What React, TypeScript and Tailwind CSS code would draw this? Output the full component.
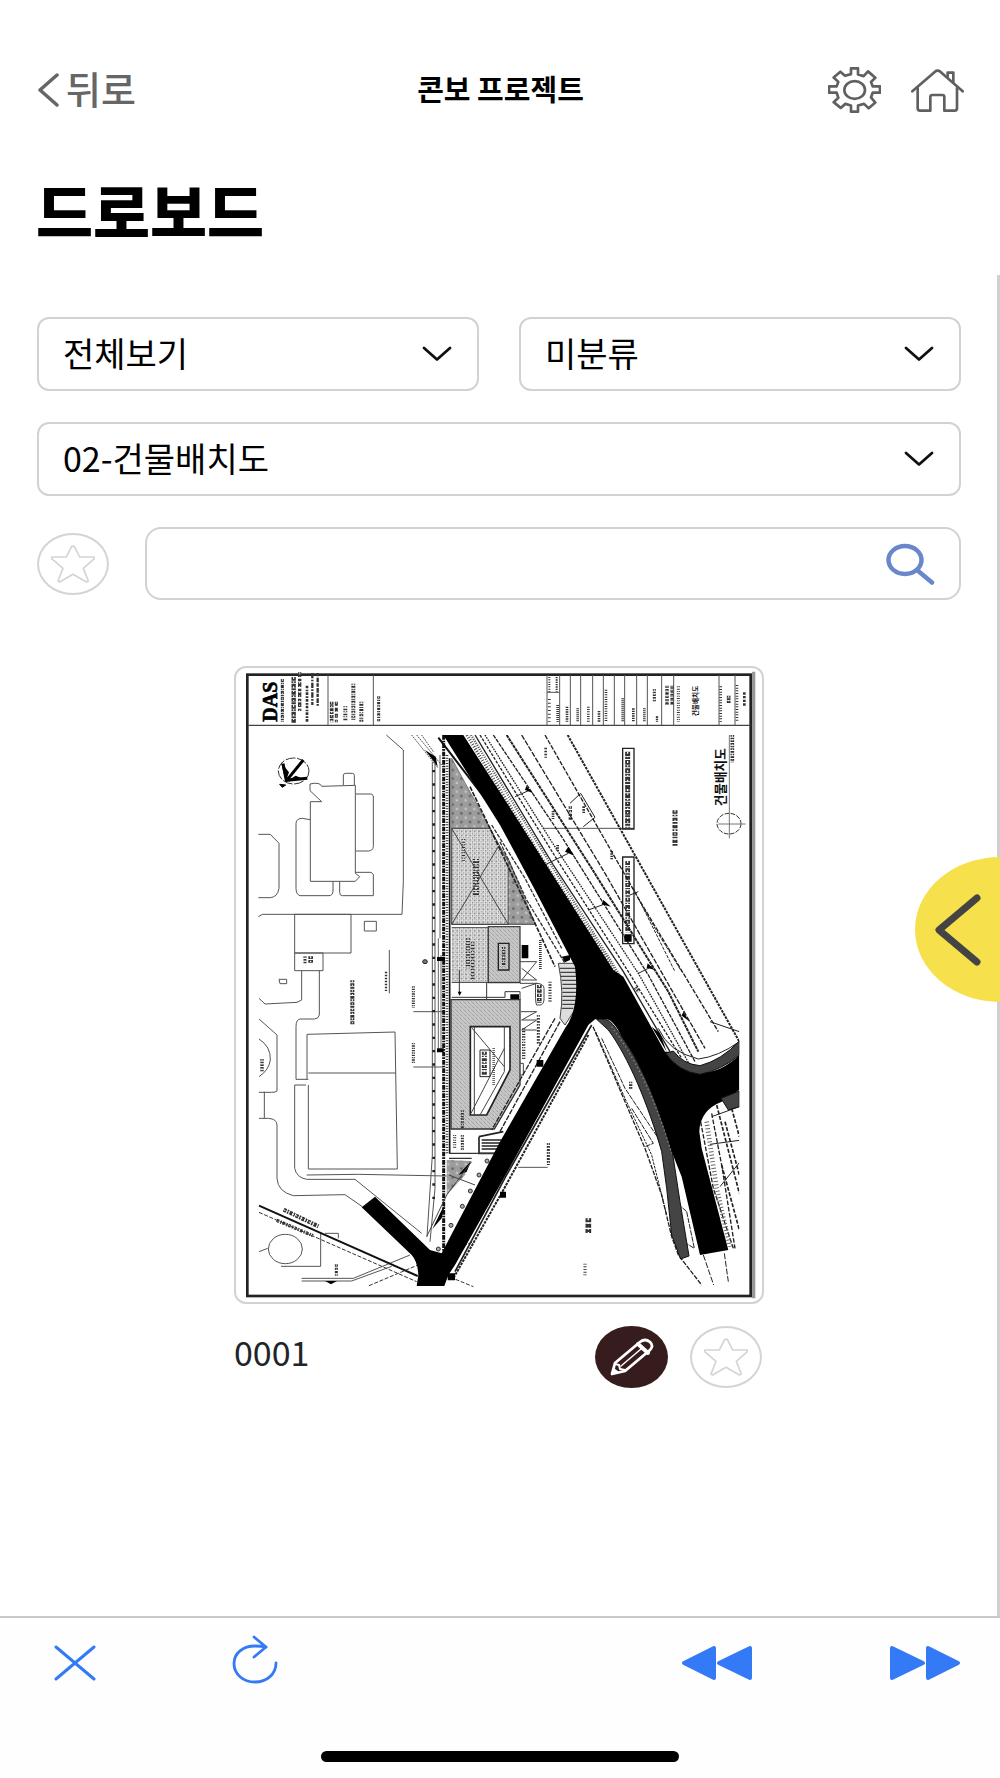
import React from 'react';

const stroke = { fill: 'none', strokeLinecap: 'round', strokeLinejoin: 'round' } as const;

function StarIcon() {
  return (
    <svg viewBox="0 0 132 114" className="h-[38px] w-11" aria-hidden="true">
      <path d="M62 4H70L86 36H130V41L97 70L112 108L106 111L66 88L26 111L21 108L36 70L2 41V36H46Z" stroke="#d4d4d4" strokeWidth="5" {...stroke} />
    </svg>
  );
}

function StarButton({ label }: { label: string }) {
  return (
    <button type="button" aria-label={label} className="flex h-[62px] w-[72px] shrink-0 items-center justify-center rounded-[50%] border-2 border-[#d4d4d4]">
      <StarIcon />
    </button>
  );
}

function Dropdown({ label, options }: { label: string; options: string[] }) {
  return (
    <div className="relative w-full">
      <select aria-label={label} className="h-[74px] w-full appearance-none rounded-xl border-2 border-[#d2d2d2] bg-white pr-16 pb-1 pl-6 text-[34px] text-black">
        {options.map((o) => (
          <option key={o}>{o}</option>
        ))}
      </select>
      <svg viewBox="0 0 30 16" className="pointer-events-none absolute top-[29px] right-[27px] h-4 w-[30px]" aria-hidden="true">
        <path d="M2 2L15 13.500L28 2" stroke="#111" strokeWidth="2.800" {...stroke} />
      </svg>
    </div>
  );
}

/* Rows of unreadable annotation on the sheet, drawn as broken strokes. */
const notes: [number, number, number, number, number, string][] = [
  [172, 72, 172, 200, 9, '9 2 5 2'],
  [206, 66, 206, 204, 13, '11 2 6 2'],
  [224, 52, 224, 168, 10, '14 5 8 3'],
  [246, 92, 246, 202, 8, '8 4 5 3'],
  [262, 54, 262, 150, 7, '16 4 5 4'],
  [278, 54, 278, 152, 7, '10 4 14 3'],
  [320, 140, 320, 202, 11, '9 2 6 3'],
  [334, 140, 334, 202, 9, '12 6'],
  [361, 154, 361, 196, 12, '3 4 5 3'],
  [385, 86, 385, 196, 12, '3 3 6 3'],
  [409, 140, 409, 200, 12, '3 3 6 4'],
  [461, 124, 461, 202, 9, '7 3 4 3'],
  [973, 66, 973, 110, 6, '3 4'], [995, 66, 995, 110, 6, '4 3'],
  [973, 132, 973, 200, 8, '3 8'], [998, 150, 998, 200, 8, '3 3'],
  [1026, 155, 1026, 200, 8, '4 3'], [1058, 160, 1058, 200, 8, '3 3'],
  [1090, 155, 1090, 200, 8, '3 4'], [1122, 168, 1122, 200, 8, '4 3'],
  [1143, 104, 1143, 200, 8, '3 4'], [1193, 130, 1193, 200, 8, '3 3'],
  [1225, 160, 1225, 200, 8, '4 3'], [1258, 160, 1258, 200, 8, '3 3'],
  [1288, 102, 1288, 140, 9, '5 3'], [1296, 184, 1296, 200, 7, '5 2'],
  [1326, 92, 1326, 152, 10, '7 3'], [1341, 92, 1341, 150, 9, '9 3'],
  [1360, 94, 1360, 200, 9, '3 4'],
  [1487, 94, 1487, 200, 8, '3 5'], [1511, 122, 1511, 146, 11, '6 2'],
  [1536, 90, 1536, 200, 8, '3 5'], [1558, 112, 1558, 156, 8, '7 4'],
  [962, 278, 962, 308, 8, '5 4'], [984, 468, 984, 492, 8, '4 3'],
  [998, 570, 998, 588, 8, '4 3'], [1036, 454, 1036, 496, 10, '7 4'],
  [1076, 454, 1076, 474, 8, '5 3'], [1160, 588, 1160, 614, 8, '4 3'],
  [1208, 290, 1208, 518, 15, '14 2 6 3'], [1208, 618, 1208, 832, 14, '12 3 4 3'],
  [1350, 466, 1350, 576, 15, '10 3 5 4'], [1522, 240, 1522, 322, 11, '5 3'],
  [240, 904, 240, 926, 9, '5 3'], [257, 904, 257, 926, 14, '8 3'],
  [382, 976, 382, 1110, 12, '6 3 8 2'], [483, 950, 483, 1008, 7, '5 4'],
  [565, 994, 565, 1058, 9, '4 3'], [565, 1164, 565, 1224, 9, '4 3'],
  [712, 1440, 712, 1486, 9, '5 3'], [689, 1440, 689, 1480, 9, '3 4'],
  [111, 1212, 111, 1250, 10, '5 3'], [176, 1664, 280, 1714, 12, '9 3 5 3'],
  [155, 1696, 264, 1742, 10, '8 4 4 3'], [334, 1828, 334, 1862, 9, '7 3'],
  [970, 1464, 970, 1530, 9, '6 3'], [1090, 1690, 1090, 1738, 17, '12 4'],
  [1080, 1826, 1080, 1862, 9, '3 5'], [896, 1120, 896, 1216, 10, '4 4'],
  [940, 1080, 940, 1168, 9, '5 4'], [975, 980, 975, 1040, 9, '4 4'],
  [946, 855, 946, 945, 8, '3 3'], [943, 990, 943, 1044, 14, '10 3'],
  [1217, 1280, 1217, 1302, 10, '5 3'], [1230, 998, 1242, 1010, 10, '5 3'],
];

/* Annotation that lies on top of the paving and the buildings. */
const planNotes: [number, number, number, number, number, string][] = [
  [715, 552, 715, 618, 10, '3 5'],
  [753, 612, 753, 722, 18, '3 4 5 4'],
  [729, 850, 729, 940, 12, '4 4'],
  [743, 860, 743, 975, 10, '5 4'],
  [778, 1190, 778, 1260, 15, '9 3 4 4'],
  [806, 1180, 806, 1290, 8, '2 4'],
  [712, 1366, 712, 1420, 9, '5 3'],
  [836, 876, 836, 934, 10, '6 3 4 3'],
];

function Notes({ rows }: { rows: typeof notes }) {
  return (
    <g fill="none">
      {rows.map(([x1, y1, x2, y2, w, dash], i) => (
        <g key={i}>
          <path d={`M${x1} ${y1}L${x2} ${y2}`} stroke="#333" strokeWidth={w} strokeDasharray={dash} />
          {w > 8 && <path d={`M${x1} ${y1}L${x2} ${y2}`} stroke="#fff" strokeWidth={w / 4} strokeDasharray="6 7 4 11" />}
        </g>
      ))}
    </g>
  );
}

function SitePlan() {
  return (
    <svg viewBox="27 33 1590 1914" className="block h-auto w-full" role="img" aria-label="건물배치도 도면">
      <defs>
        <pattern id="grid" width="13" height="13" patternUnits="userSpaceOnUse">
          <rect width="13" height="13" fill="#e6e6e6" />
          <path d="M1 0V9M0 2H9" stroke="#666" strokeWidth="2" strokeDasharray="3 3" />
          <circle cx="8" cy="9" r="3" fill="#8a8a8a" />
        </pattern>
        <pattern id="hatch" width="12" height="12" patternUnits="userSpaceOnUse">
          <rect width="12" height="12" fill="#c6c6c6" />
          <path d="M0 0L12 12" stroke="#858585" strokeWidth="2" strokeDasharray="4 3" />
        </pattern>
        <pattern id="planting" width="26" height="26" patternUnits="userSpaceOnUse">
          <rect width="26" height="26" fill="#9c9c9c" />
          <circle cx="7" cy="7" r="4" fill="#666" />
          <circle cx="20" cy="20" r="4" fill="#c4c4c4" />
        </pattern>
        <clipPath id="sheet"><rect x="100" y="240" width="1443" height="1655" /></clipPath>
      </defs>

      {/* sheet border and title block */}
      <g fill="none" stroke="#222">
        <path d="M1586 50V1930" stroke="#999" strokeWidth="10" />
        <rect x="67" y="59" width="1510" height="1864" strokeWidth="8" />
        <path d="M70 211H1577" strokeWidth="4" stroke="#444" />
        <path d="M309 60V211M445 60V211M966 60V211M1004 60V211M1036 60V211M1067 60V211M1103 60V211M1135 60V211M1168 60V211M1199 60V211M1235 60V211M1267 60V211M1310 60V211M1346 60V211M1482 60V211M1530 60V211M966 112H1004" strokeWidth="3" stroke="#555" />
      </g>
      <Notes rows={notes} />
      <text transform="translate(155 200) rotate(-90)" fontFamily="'Liberation Serif', serif" fontWeight="700" fontSize="60" fill="#000" stroke="#000" strokeWidth="2">DAS</text>
      <text transform="translate(1500 454) rotate(-90)" fontFamily="'Noto Sans CJK KR', sans-serif" fontWeight="700" fontSize="38" fill="#111">건물배치도</text>
      <text transform="translate(1418 184) rotate(-90)" fontFamily="'Noto Sans CJK KR', sans-serif" fontWeight="700" fontSize="20" fill="#111">건물배치도</text>

      {/* neighbouring lots */}
      <g fill="none" stroke="#555" strokeWidth="3">
        <path d="M484 240L535 285V680L531 778H112L100 785" />
        <path d="M255 387Q285 380 290 394L391 391V655L404 665L391 679H256V440H290L255 407Z" />
        <path d="M355 390V360Q356 355 362 355H382Q388 355 388 362V390M393 417H440L445 423V575Q443 588 430 588H393M391 652H438L445 658V722H352Q344 722 344 712V680M324 680V708Q323 722 312 722H225Q213 718 213 700V505Q214 490 232 490L255 494" />
        <path d="M100 538H136L162 565V700Q158 726 136 728H100M209 778H378V894H209ZM209 894H294V947H209ZM418 799H454V828H418ZM230 947V1035L216 1042L120 1047L102 1030M283 947V1080Q280 1092 268 1092H225Q213 1094 213 1115V1273H250M162 973H185V986H165ZM102 1092L156 1140V1308Q152 1312 140 1312H102M102 1152Q138 1175 136 1215Q132 1245 102 1265M102 1390H130Q156 1392 156 1410V1570Q158 1610 205 1622L360 1619L412 1655M209 1290H243M209 1290V1540Q215 1568 245 1573H390L590 1735" />
        <path d="M246 1138L510 1131L517 1542H250V1290M246 1138V1273M250 1254H512M245 1560L400 1558L665 1563" />
        <path d="M118 1310V1390M287 1735V1834H168M300 1735H340V1750M230 1870H385L555 1800M230 1878H380L500 1834" />
        <ellipse cx="181" cy="1782" rx="51" ry="44" />
        <path d="M102 1790L128 1780M493 885V1015M565 1070H655M565 1236H655M955 520H1225M880 1537H968" />
      </g>
      <path d="M102 1652L578 1863" stroke="#111" strokeWidth="6" />
      <path d="M102 1672L575 1880M432 1892L745 1760M660 1860L745 1895" fill="none" stroke="#333" strokeWidth="3" strokeDasharray="12 5" />
      <path d="M300 1878L318 1888L336 1878Z" />

      {/* north arrow and key circle */}
      <g fill="none" stroke="#333" strokeWidth="3">
        <ellipse cx="206" cy="348" rx="46" ry="39" strokeDasharray="30 5" />
        <ellipse cx="1512" cy="506" rx="36" ry="31" strokeDasharray="14 4" />
        <path d="M1513 240V550M1480 507H1562" stroke="#777" />
      </g>
      <path d="M235 315L185 376M174 326L184 376L247 370" fill="none" stroke="#000" strokeWidth="9" />
      <path d="M168 322L192 352L182 380ZM182 380L212 362L236 372Z" />
      <path d="M164 388L182 390L172 397Z" stroke="#000" strokeWidth="3" />

      <g clipPath="url(#sheet)">
        {/* site boundary */}
        <path d="M622 320V1500L606 1745M630 320V1600L615 1760" fill="none" stroke="#555" strokeWidth="3" />
        <path d="M626 345V1640" stroke="#222" strokeWidth="8" strokeDasharray="7 33" />
        <path d="M645 300V850M640 850V1180M648 900V1180" stroke="#666" strokeWidth="3" fill="none" />
        <path d="M656 240V1795" stroke="#111" strokeWidth="9" strokeDasharray="14 3 5 3" />
        <path d="M666 300V1500" stroke="#333" strokeWidth="8" strokeDasharray="3 5" />
        <path d="M674 310V1495" stroke="#111" strokeWidth="5" />
        <path d="M636 906H660V918H636ZM636 1180H656V1192H636Z" />
        <ellipse cx="600" cy="920" rx="7" ry="6" fill="#777" stroke="#222" strokeWidth="3" />
        <path d="M560 240L640 340M575 240L650 330M590 240L625 290" stroke="#444" strokeWidth="3" strokeDasharray="5 3" />
        <path d="M600 285L632 305L638 335Z" />

        {/* buildings and paving */}
        <path d="M680 310L795 520H680Z" fill="url(#planting)" stroke="#555" strokeWidth="2" />
        <path d="M680 520H795L850 620V808H680Z" fill="url(#grid)" stroke="#444" strokeWidth="3" />
        <path d="M680 520L850 808M820 575L680 808" stroke="#444" strokeWidth="3" />
        <path d="M820 575L850 610L930 805H850V620Z" fill="url(#planting)" stroke="#555" strokeWidth="2" />
        <rect x="680" y="820" width="110" height="160" fill="url(#grid)" />
        <path d="M680 808H930M680 818H790V980" fill="none" stroke="#444" strokeWidth="3" />
        <path d="M790 815H885V983H790Z" fill="url(#hatch)" stroke="#444" strokeWidth="4" />
        <path d="M820 865H852V945H820Z" fill="none" stroke="#222" strokeWidth="4" />
        <path d="M680 982H885M680 1027H840V1010H885V1034H680M785 982V1034M703 945V1020" fill="none" stroke="#333" strokeWidth="3" />
        <path d="M856 1018H882V1034H856ZM890 870H910V910H890ZM698 1010H710L704 1022Z" />
        <path d="M678 1034H885V1290L808 1422H678Z" fill="url(#hatch)" stroke="#333" strokeWidth="4" />
        <path d="M736 1115H855V1245L785 1380H736Z" fill="#fff" stroke="#222" strokeWidth="5" />
        <path d="M748 1115V1380M838 1115V1250L765 1380M740 1118L838 1235M738 1375L838 1180" fill="none" stroke="#444" strokeWidth="3" />
        <path d="M765 1185H795V1265H765Z" fill="none" stroke="#222" strokeWidth="3" />
        <path d="M885 920H935L890 975H935L890 940M885 985H935L890 1000M888 1070H935L890 1095H935L890 1125H935M885 1225H895V1260H885M932 985Q957 985 957 1000V1035Q955 1050 945 1050H935Q930 1045 932 985" fill="none" stroke="#444" strokeWidth="3" />
        <path d="M762 1445L835 1430M762 1445V1495H840M770 1455H830M770 1464H830M770 1473H825M770 1482H820" fill="none" stroke="#222" strokeWidth="5" />
        <path d="M672 1495H840M672 1510H740" stroke="#333" strokeWidth="4" />
        <path d="M665 1515L738 1518L720 1560L665 1620Z" fill="url(#planting)" />
        <path d="M738 1518L725 1550L700 1560ZM660 1650L650 1690L622 1722L650 1665Z" />
        <path d="M740 1520L665 1620L605 1745M672 1560L750 1590" fill="none" stroke="#444" strokeWidth="3" />
        <g fill="#aaa" stroke="#333" strokeWidth="3">
          <circle cx="786" cy="1518" r="6" />
          <circle cx="762" cy="1560" r="6" />
          <circle cx="736" cy="1608" r="6" />
          <circle cx="712" cy="1654" r="6" />
          <circle cx="678" cy="1711" r="6" />
          <circle cx="640" cy="1782" r="6" />
        </g>
        <Notes rows={planNotes} />

        {/* frontage between the plots and the main road */}
        <path d="M640 248L780 430" fill="none" stroke="#111" strokeWidth="6" />
        <path d="M735 395L795 520L930 805L990 935" fill="none" stroke="#222" strokeWidth="5" strokeDasharray="14 4" />
        <path d="M825 560L905 735L1020 925M800 510L900 670L1010 880" fill="none" stroke="#333" strokeWidth="4" strokeDasharray="12 4" />
        <path d="M1000 925H1055L1062 1045L1020 1110L1005 1090Q1018 1010 1000 925Z" fill="#ddd" stroke="#444" strokeWidth="3" />
        <path d="M1004 940H1060M1006 952H1060M1008 964H1060M1010 976H1060M1012 988H1060M1012 1000H1060M1012 1012H1060M1012 1024H1060M1012 1036H1055M1012 1048H1050M1010 1060H1045" stroke="#444" strokeWidth="4" />
        <path d="M1005 1100L825 1430M990 1090L800 1425" fill="none" stroke="#222" strokeWidth="4" strokeDasharray="16 4" />
        <path d="M935 1215H955V1235H935ZM1010 905L1035 900V915L1020 922ZM905 735L930 770Z" />

        {/* outer lanes */}
        <g fill="none" stroke="#222" strokeWidth="4">
          <path d="M1028 240L1543 1160" strokeDasharray="8 3" strokeWidth="6" />
          <path d="M960 240L1240 730L1480 1130" strokeDasharray="14 4" />
          <path d="M890 240L1140 655L1440 1180" strokeDasharray="16 4" />
          <path d="M845 240L1100 640L1330 1010L1420 1190" strokeWidth="6" strokeDasharray="10 2" />
          <path d="M805 240L1010 545L1270 960L1410 1220" strokeDasharray="12 3" />
          <path d="M780 240L980 560L1240 955L1400 1240" strokeDasharray="5 3" />
          <path d="M765 240L1000 620L1210 950L1370 1210" strokeDasharray="9 4" />
          <path d="M750 240L985 630L1195 950L1335 1190" />
          <path d="M738 240L960 600L1190 970" strokeWidth="7" strokeDasharray="3 4" stroke="#555" />
          <path d="M726 240L950 610L1180 965" strokeWidth="10" strokeDasharray="3 5" stroke="#444" />
          <path d="M1240 730L1290 820L1370 950M1225 700L1350 950" strokeDasharray="10 4" strokeWidth="3" />
          <path d="M1035 445L1067 415L1110 487L1075 515M955 632L1030 595M1090 765L1145 745M870 425L915 405M1240 955L1280 935M1215 720L1240 710" strokeWidth="3" />
          <path d="M1193 280H1227V522H1193ZM1193 606H1227V866H1193Z" />
          <path d="M1455 1100L1543 1130M1300 1120Q1330 1190 1420 1212Q1480 1205 1543 1160" strokeWidth="3" />
        </g>
        <path d="M904 393L925 415L900 405ZM1030 575L1048 602L1020 590ZM1135 735L1158 755L1130 748ZM1268 925L1290 945L1265 938ZM1375 1070L1392 1098L1370 1082ZM1198 838H1220V860H1198ZM1280 1115L1305 1135L1325 1190Z" />

        {/* secondary roads and verges */}
        <g fill="none" stroke="#222" strokeWidth="4">
          <path d="M1104 1115L1260 1480L1310 1620L1340 1745L1360 1800L1430 1890" strokeDasharray="14 4" />
          <path d="M1112 1130L1200 1330L1280 1500L1325 1680" strokeDasharray="8 3" strokeWidth="3" />
          <path d="M1130 1150L1200 1300L1300 1450M1220 1360L1285 1465L1260 1475M1330 1620L1385 1670M1385 1670L1408 1780L1375 1760" strokeWidth="3" strokeDasharray="16 3" />
          <path d="M1435 1800L1466 1890M1498 1795L1510 1880" strokeWidth="3" strokeDasharray="18 5" />
          <path d="M1427 1400L1465 1600L1525 1780M1460 1375L1490 1530L1530 1780" strokeDasharray="14 5" />
          <path d="M1445 1400L1475 1600L1515 1775" strokeWidth="14" strokeDasharray="3 7" stroke="#666" />
          <path d="M1475 1350L1543 1615M1500 1400L1543 1560M1520 1360L1543 1445M1490 1530L1543 1725" strokeWidth="5" strokeDasharray="12 5" />
          <path d="M1460 1385L1543 1355M1455 1468L1543 1456M1485 1595L1543 1523" strokeWidth="3" />
          <path d="M1100 1110L842 1565L690 1850M1080 1110L842 1540" strokeWidth="5" />
          <path d="M1090 1140L835 1605L685 1870" strokeWidth="6" strokeDasharray="8 3" />
        </g>
        <path d="M825 1610H843V1628H825ZM668 1855H690V1876H668Z" />
        <path d="M1115 1093Q1145 1085 1165 1110C1230 1195 1300 1330 1342 1490L1365 1640L1392 1803L1367 1812L1340 1740L1325 1600L1310 1490C1270 1350 1210 1205 1150 1125Z" fill="#444" stroke="#111" strokeWidth="3" />

        <path d="M655 240H715L840 435L1165 945L1195 965L1320 1190L1335 1190C1380 1260 1460 1280 1543 1200V1305L1490 1340Q1425 1365 1423 1430L1430 1480L1510 1785L1425 1800L1370 1565L1340 1490C1310 1390 1260 1240 1190 1145Q1165 1095 1145 1093H1110L1090 1110L842 1560L690 1830L670 1860L658 1893H575L580 1860Q578 1820 560 1800L410 1657L450 1625L615 1785L650 1795L825 1460L1020 1120Q1065 1060 1050 935L930 705L825 510Z" fill="#000" />
        <path d="M1322 1195L1345 1188Q1375 1228 1425 1232Q1490 1215 1543 1158V1200Q1490 1245 1425 1258Q1360 1250 1322 1195ZM1488 1330L1543 1308V1355L1510 1365Z" fill="#444" stroke="#111" strokeWidth="3" />
        <path d="M1160 1115C1240 1220 1300 1360 1340 1495" fill="none" stroke="#888" strokeWidth="4" strokeDasharray="4 8" />
      </g>
    </svg>
  );
}

export default function App() {
  return (
    <div className="flex min-h-screen flex-col bg-white font-['Noto_Sans_CJK_KR',sans-serif] text-black">
      <header>
        <div className="grid h-[180px] grid-cols-[1fr_auto_1fr] items-center pr-9 pl-[37px]">
          <button type="button" className="flex items-center gap-[7px] justify-self-start text-[38px] leading-none text-[#666]">
            <svg viewBox="0 0 22 34" className="h-[34px] w-[22px]" aria-hidden="true">
              <path d="M20 2L3 17L20 32" stroke="#666" strokeWidth="3.500" {...stroke} />
            </svg>
            <span className="pb-1 font-medium">뒤로</span>
          </button>
          <p className="pb-1 text-[29px] leading-none font-bold">콘보 프로젝트</p>
          <div className="flex items-center gap-[30px] justify-self-end">
            <button type="button" aria-label="설정">
              <svg viewBox="146 82 159 136" className="block h-[46px] w-[53px]" preserveAspectRatio="none">
                <g stroke="#606060" strokeWidth="8" {...stroke}>
                  <path d="M215 86H236V104L253 109L266 95L288 114L275 126L280 139H302V158H280L275 172L288 187L268 204L254 191L236 196V214H215V196L198 191L184 203L163 186L177 173L172 158H149V139H172L177 126L163 113L183 96L197 108L215 103Z" />
                  <ellipse cx="226" cy="150" rx="31" ry="26" />
                </g>
              </svg>
            </button>
            <button type="button" aria-label="홈">
              <svg viewBox="393 84 159 129" className="block h-[43px] w-[53px]">
                <g stroke="#606060" strokeWidth="8" {...stroke}>
                  <path d="M397 151L465 92Q473 86 481 92L548 151" />
                  <path d="M413 141V202Q413 209 420 209H451V168Q451 162 457 162H487Q493 162 493 168V209H524Q531 209 531 202V141" />
                  <path d="M503 107V95H520V123" />
                </g>
              </svg>
            </button>
          </div>
        </div>
        <h1 className="pb-[35px] pl-9 text-[62px] leading-[60px] font-black">드로보드</h1>
      </header>

      <div className="relative flex flex-1 flex-col">
        <main className="flex-1 border-r-[3px] border-[#d0d0d0] pt-[42px] pr-9 pb-10 pl-[37px]">
          <div className="flex flex-col gap-[31px]">
            <div className="flex gap-10">
              <Dropdown label="보기" options={['전체보기']} />
              <Dropdown label="분류" options={['미분류']} />
            </div>
            <Dropdown label="도면" options={['02-건물배치도']} />
            <div className="flex items-center gap-9">
              <StarButton label="즐겨찾기만 보기" />
              <div className="relative min-w-0 flex-1">
                <input type="search" aria-label="검색" className="block h-[73px] w-full rounded-2xl border-2 border-[#d2d2d2] bg-white pr-24 pl-6 text-[34px] outline-none" />
                <button type="button" aria-label="검색 실행" className="absolute top-4 right-[26px]">
                  <svg viewBox="0 0 49 42" className="block h-[42px] w-[49px]">
                    <g stroke="#6a87cb" strokeWidth="4.500" {...stroke}>
                      <ellipse cx="19" cy="17" rx="16.500" ry="14" />
                      <path d="M31 27L46 39.500" />
                    </g>
                  </svg>
                </button>
              </div>
            </div>
          </div>

          <article className="mx-auto mt-[66px] w-[530px] max-w-full">
            <div className="rounded-xl outline-2 -outline-offset-2 outline-[#d2d2d2]">
              <SitePlan />
            </div>
            <div className="mt-[22px] flex items-start pr-0.5">
              <p className="flex-1 text-[34px] leading-[52px] text-[#212529]">0001</p>
              <div className="flex gap-[22px]">
                <button type="button" aria-label="편집" className="flex h-[62px] w-[73px] items-center justify-center rounded-[50%] bg-[#371c1d]">
                  <svg viewBox="0 0 44 38" className="h-[38px] w-11">
                    <g stroke="#fff" strokeWidth="2.800" {...stroke}>
                      <path d="M2 36L5 25L30 4Q35 0 40 4Q44 8 40 12L15 33Z" />
                      <path d="M5 26L9 27L10 31L15 32" strokeWidth="2" />
                      <path d="M28 6L38 15" strokeWidth="4" />
                      <path d="M11 28L31 11" strokeWidth="1.500" />
                    </g>
                    <path d="M2 36L4 30L9 34Z" fill="#fff" />
                  </svg>
                </button>
                <StarButton label="즐겨찾기" />
              </div>
            </div>
          </article>
        </main>
        <button type="button" aria-label="메뉴 열기" className="absolute top-[582px] right-0 flex h-[145px] w-[85px] items-center rounded-[100%_0_0_100%/50%_0_0_50%] bg-[#f6e04b] pl-[19px]">
          <svg viewBox="0 0 48 74" className="h-[74px] w-12">
            <path d="M43 5L5 37L43 69" stroke="#444" strokeWidth="7" {...stroke} />
          </svg>
        </button>
      </div>

      <footer className="border-t-2 border-[#c8c8c8] bg-[#fefefe]">
        <nav className="flex items-center pt-[17px] pr-[39px] pl-[37px]">
          <button type="button" aria-label="닫기" className="flex h-14 w-[76px] items-center justify-center">
            <svg viewBox="0 0 42 36" className="h-9 w-[42px]">
              <path d="M2 2L40 34M40 2L2 34" stroke="#347af6" strokeWidth="3" {...stroke} />
            </svg>
          </button>
          <button type="button" aria-label="새로고침" className="ml-[104px] flex h-14 w-[76px] items-start justify-center">
            <svg viewBox="0 0 46 49" className="h-[49px] w-[46px]">
              <g stroke="#347af6" strokeWidth="2.800" {...stroke}>
                <path d="M44 28C44 39 35 47 23 47S2 39 2 28.500S11 11 23 11Q29 11 34 12" />
                <path d="M22 2L34 12L22 22" />
              </g>
            </svg>
          </button>
          <button type="button" aria-label="이전" className="ml-auto">
            <svg viewBox="0 0 72 36" className="h-9 w-[72px]">
              <path d="M3 18L33 3V33ZM38 18L69 3V33Z" fill="#347af6" stroke="#347af6" strokeWidth="4" strokeLinejoin="round" />
            </svg>
          </button>
          <button type="button" aria-label="다음" className="ml-[136px]">
            <svg viewBox="0 0 72 36" className="h-9 w-[72px]">
              <path d="M69 18L39 3V33ZM34 18L3 3V33Z" fill="#347af6" stroke="#347af6" strokeWidth="4" strokeLinejoin="round" />
            </svg>
          </button>
        </nav>
        <div className="mx-auto mt-[60px] mb-4 h-[11px] w-[358px] rounded-full bg-black" />
      </footer>
    </div>
  );
}
